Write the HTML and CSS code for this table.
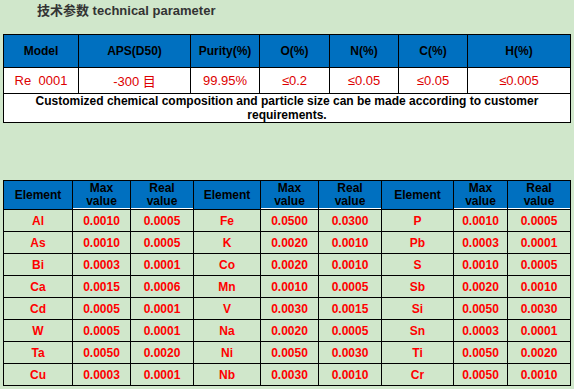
FILE: index.html
```html
<!DOCTYPE html>
<html>
<head>
<meta charset="utf-8">
<link rel="stylesheet" href="styles.css">
</head>
<body>
<div class="page">
  <h2 class="title">技术参数 technical parameter</h2>
  <table class="spec">
    <colgroup>
      <col style="width:75px"><col style="width:112px"><col style="width:69px"><col style="width:70px"><col style="width:69px"><col style="width:69px"><col style="width:103px">
    </colgroup>
    <tr class="head">
      <th>Model</th><th>APS(D50)</th><th>Purity(%)</th><th>O(%)</th><th>N(%)</th><th>C(%)</th><th>H(%)</th>
    </tr>
    <tr class="data">
      <td>Re&nbsp; 0001</td><td>-300 目</td><td>99.95%</td><td>≤0.2</td><td>≤0.05</td><td>≤0.05</td><td>≤0.005</td>
    </tr>
    <tr class="note">
      <td colspan="7">Customized chemical composition and particle size can be made according to customer requirements.</td>
    </tr>
  </table>

  <table class="elems">
    <colgroup>
      <col style="width:69px"><col style="width:58px"><col style="width:63px">
      <col style="width:67px"><col style="width:58px"><col style="width:63px">
      <col style="width:72px"><col style="width:54px"><col style="width:63px">
    </colgroup>
    <tr class="head">
      <th>Element</th><th class="v">Max<br>value</th><th class="v">Real<br>value</th>
      <th>Element</th><th class="v">Max<br>value</th><th class="v">Real<br>value</th>
      <th>Element</th><th class="v">Max<br>value</th><th class="v">Real<br>value</th>
    </tr>
    <tr><td>Al</td><td>0.0010</td><td>0.0005</td><td>Fe</td><td>0.0500</td><td>0.0300</td><td>P</td><td>0.0010</td><td>0.0005</td></tr>
    <tr><td>As</td><td>0.0010</td><td>0.0005</td><td>K</td><td>0.0020</td><td>0.0010</td><td>Pb</td><td>0.0003</td><td>0.0001</td></tr>
    <tr><td>Bi</td><td>0.0003</td><td>0.0001</td><td>Co</td><td>0.0020</td><td>0.0010</td><td>S</td><td>0.0010</td><td>0.0005</td></tr>
    <tr><td>Ca</td><td>0.0015</td><td>0.0006</td><td>Mn</td><td>0.0010</td><td>0.0005</td><td>Sb</td><td>0.0020</td><td>0.0010</td></tr>
    <tr><td>Cd</td><td>0.0005</td><td>0.0001</td><td>V</td><td>0.0030</td><td>0.0015</td><td>Si</td><td>0.0050</td><td>0.0030</td></tr>
    <tr><td>W</td><td>0.0005</td><td>0.0001</td><td>Na</td><td>0.0020</td><td>0.0005</td><td>Sn</td><td>0.0003</td><td>0.0001</td></tr>
    <tr><td>Ta</td><td>0.0050</td><td>0.0020</td><td>Ni</td><td>0.0050</td><td>0.0030</td><td>Ti</td><td>0.0050</td><td>0.0020</td></tr>
    <tr><td>Cu</td><td>0.0003</td><td>0.0001</td><td>Nb</td><td>0.0030</td><td>0.0010</td><td>Cr</td><td>0.0050</td><td>0.0010</td></tr>
  </table>
</div>
</body>
</html>
```

FILE: styles.css
```css
html, body {
  margin: 0;
  padding: 0;
  background: #d0e7cb;
}
body {
  font-family: "Liberation Sans", Arial, "Noto Sans CJK SC", sans-serif;
}
.page {
  width: 574px;
  height: 389px;
  padding: 0 0 0 3px;
  box-sizing: border-box;
  overflow: hidden;
}
.title {
  margin: 0;
  height: 34px;
  padding: 3px 0 0 34px;
  box-sizing: border-box;
  font-size: 13px;
  font-weight: bold;
  color: #333333;
  line-height: 16px;
  font-family: "Liberation Sans", Arial, "Noto Sans CJK SC", sans-serif;
}
table {
  border-collapse: collapse;
  table-layout: fixed;
  width: 568px;
}
th, td {
  border: 1px solid #000;
  padding: 0;
  text-align: center;
  overflow: hidden;
  white-space: nowrap;
}
.spec .head th {
  background: #0070c0;
  color: #000;
  font-size: 12px;
  font-weight: bold;
  height: 32px;
}
.spec .data td {
  background: #fff;
  color: #dd0000;
  font-size: 13px;
  height: 25px;
}
.spec .note td {
  background: #fff;
  color: #000;
  font-size: 12px;
  font-weight: bold;
  white-space: normal;
  line-height: 14px;
  height: 28px;
  padding: 0 2px;
}
.elems {
  margin-top: 57px;
}
.elems .head th {
  background: #0070c0;
  color: #000;
  font-size: 12px;
  font-weight: bold;
  line-height: 13px;
  height: 28px;
}
.elems .head th.v {
  box-shadow: inset 0 -1px 0 #ffffff;
}
.elems td {
  color: #ff0000;
  font-size: 12px;
  font-weight: bold;
  height: 21px;
}
```
